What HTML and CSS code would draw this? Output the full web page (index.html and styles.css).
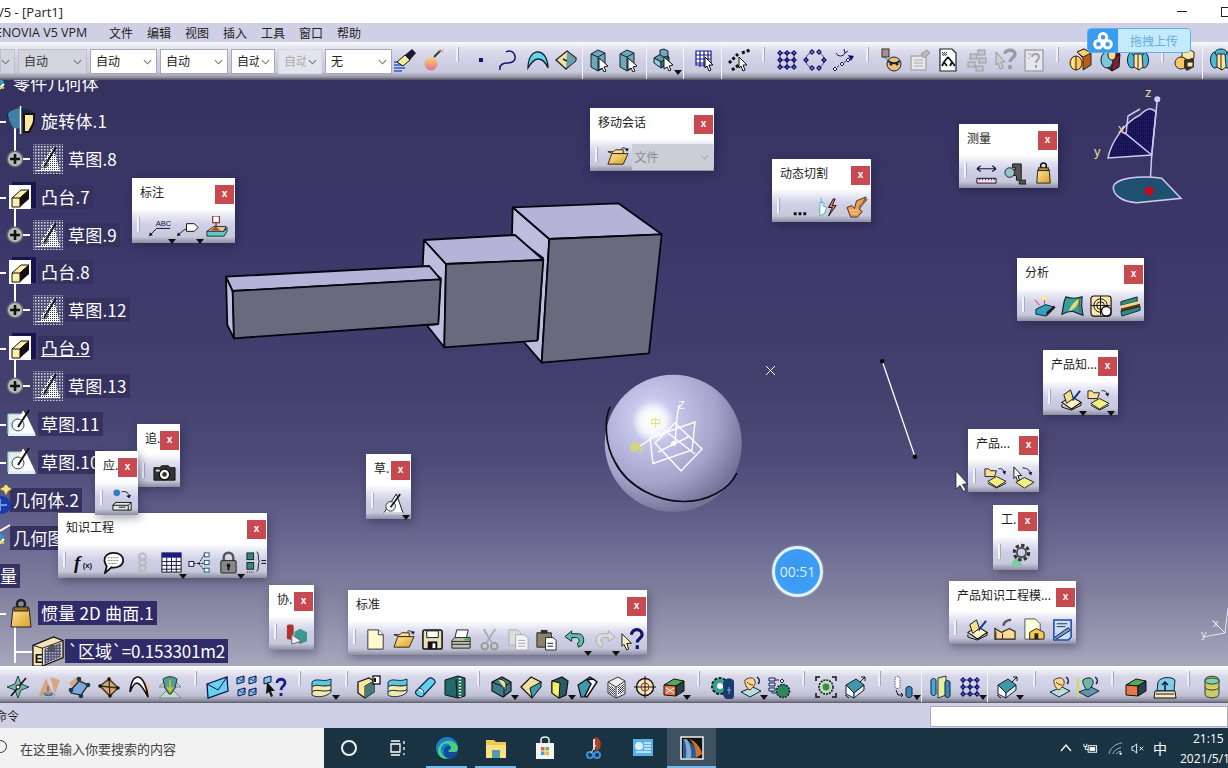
FILE: index.html
```html
<!DOCTYPE html>
<html lang="zh">
<head>
<meta charset="utf-8">
<title>CATIA V5 - [Part1]</title>
<link rel="stylesheet" href="styles.css">
</head>
<body>
<svg class="defs" aria-hidden="true">
<defs>
<pattern id="dith" width="2" height="2" patternUnits="userSpaceOnUse"><rect width="2" height="2" fill="#eef"/><rect width="1" height="1" fill="#334"/><rect x="1" y="1" width="1" height="1" fill="#556"/></pattern>
<pattern id="dotw" width="2" height="2" patternUnits="userSpaceOnUse"><rect width="2" height="2" fill="#fff"/><rect width="1" height="1" fill="#3a3a55"/></pattern>
<pattern id="dotd" width="3" height="3" patternUnits="userSpaceOnUse"><rect width="3" height="3" fill="#4a4a72"/><rect width="1.500" height="1.500" fill="#d8d8e8"/></pattern>
<pattern id="hatch" width="2" height="2" patternUnits="userSpaceOnUse"><rect width="2" height="2" fill="#15124f"/><rect width="1" height="1" fill="#25216c"/></pattern>
<linearGradient id="gold" x1="0" y1="0" x2="1" y2="1"><stop offset="0" stop-color="#ffe7a0"/><stop offset="1" stop-color="#d9a020"/></linearGradient>
<linearGradient id="bulbg" x1="0" y1="0" x2="0" y2="1"><stop offset="0" stop-color="#ffd060"/><stop offset="1" stop-color="#e070a0"/></linearGradient>
</defs>
<symbol id="brush" viewBox="0 0 24 24"><path d="M1 14h11M1 17h9M1 20h11M1 23h8" stroke="#2a5bd0" stroke-width="1.5"/><path d="M4 14l8-7 5 5-7 6z" fill="#f6e9a0" stroke="#111"/><path d="M12 7l7-6 4 4-6 7z" fill="#1c1c30"/></symbol>
<symbol id="bulb" viewBox="0 0 24 24"><circle cx="9" cy="16" r="6.5" fill="url(#bulbg)"/><path d="M12 9l7-7" stroke="#333" stroke-width="2"/><path d="M17 3l5-1M18 1l3 4" stroke="#e8a080"/></symbol>
<symbol id="pt" viewBox="0 0 24 24"><rect x="10" y="10" width="4" height="4" fill="#141470"/></symbol>
<symbol id="curve" viewBox="0 0 24 24"><path d="M3 22c-1-6 4-7 8-7s8-2 7-7-6-6-9-4" fill="none" stroke="#141470" stroke-width="1.5"/></symbol>
<symbol id="surf" viewBox="0 0 24 24"><path d="M2 20C2 8 8 3 13 4s9 7 9 16c-3-7-6-9-10-9s-7 4-10 9z" fill="#5fd8e8" stroke="#123" stroke-width="1.3"/></symbol>
<symbol id="block" viewBox="0 0 24 24"><path d="M2 12L13 3l9 7-10 11z" fill="#f3e2a2" stroke="#222" stroke-width="1.3"/><path d="M13 3l9 7v3L12 21" fill="#6ca0a8" stroke="#222"/><path d="M9 11l4 2" stroke="#222" stroke-width="1.4"/></symbol>
<symbol id="vcube" viewBox="0 0 24 24"><path d="M4 6l7-4 7 3v14l-7 4-7-4z" fill="#70a8b8" stroke="#123"/><path d="M4 6l7 3 7-4M11 9v14" stroke="#123" fill="none"/><path d="M12 10l9 8-4 1 2 4-2 1-2-4-3 2z" fill="#fff" stroke="#111"/></symbol>
<symbol id="cstack" viewBox="0 0 24 24"><path d="M1 10l8-5 7 4-8 5z" fill="#5f98a8" stroke="#123"/><path d="M1 10v5l7 5V14z" fill="#9cc8d2" stroke="#123"/><path d="M8 14v6l8-5V9z" fill="#3d7888" stroke="#123"/><path d="M7 2l4-1 4 2v5l-4 1-4-2z" fill="#70a8b8" stroke="#123"/><path d="M11 9l9 8-4 1 2 4-2 1-2-4-3 2z" fill="#fff" stroke="#111"/></symbol>
<symbol id="gridc" viewBox="0 0 24 24"><path d="M4 3h15v14H4zM4 7h15M4 11h15M4 15h15M8 3v16M12 3v16M16 3v14" fill="#fff" stroke="#1a1a90" stroke-width="1.2"/><path d="M13 9l8 8-4 0 2 5-2 1-2-5-2 2z" fill="#fff" stroke="#111"/></symbol>
<symbol id="dotc" viewBox="0 0 24 24"><path d="M1 15l9-9M14 5l8-3M4 22l8-6" stroke="#111" stroke-width="3" stroke-dasharray="3 2" fill="none"/><path d="M11 9l8 8-4 0 2 5-2 1-2-5-2 2z" fill="#fff" stroke="#111"/></symbol>
<symbol id="grid9" viewBox="0 0 24 24"><path d="M5 5h14v14H5zM5 12h14M12 5v14" fill="none" stroke="#111070" stroke-width=".8"/><g fill="none" stroke="#0c0c70" stroke-width="1.3"><path d="M3 5l2-2 2 2-2 2zM10 5l2-2 2 2-2 2zM17 5l2-2 2 2-2 2zM3 12l2-2 2 2-2 2zM10 12l2-2 2 2-2 2zM17 12l2-2 2 2-2 2zM3 19l2-2 2 2-2 2zM10 19l2-2 2 2-2 2zM17 19l2-2 2 2-2 2z"/></g></symbol>
<symbol id="circ8" viewBox="0 0 24 24"><g fill="none" stroke="#0c0c70" stroke-width="1.3"><path d="M7 4l2-2 2 2-2 2zM14 4l2-2 2 2-2 2zM1 12l2-2 2 2-2 2zM19 12l2-2 2 2-2 2zM7 20l2-2 2 2-2 2zM14 20l2-2 2 2-2 2z"/></g><path d="M7 5c-3 2-4 4-4 7s1 5 4 7M17 5c3 2 4 4 4 7s-1 5-4 7" fill="none" stroke="#0c0c70" stroke-width=".7"/></symbol>
<symbol id="arrdots" viewBox="0 0 24 24"><path d="M2 21L22 8" stroke="#111070" stroke-dasharray="2 2"/><path d="M16 7l6 1-3 5z" fill="#111070"/><g fill="#fff" stroke="#0c0c70"><path d="M1 21l2-2 2 2-2 2zM8 16l2-2 2 2-2 2zM14 12l2-2 2 2-2 2z"/></g><path d="M4 5c2 4 7 4 9 0M12 1l1 4 3-2" fill="none" stroke="#111070"/></symbol>
<symbol id="geoc" viewBox="0 0 24 24"><rect x="3" y="1" width="7" height="8" fill="#a89080" stroke="#333"/><path d="M5 9l7 6" stroke="#333" stroke-dasharray="2 1"/><circle cx="15" cy="16" r="7" fill="#f0c070" stroke="#124"/><path d="M9 13c4 3 8 3 12 0" fill="none" stroke="#124" stroke-width="2"/><circle cx="12" cy="16" r="1.5" fill="#124"/><circle cx="18" cy="16" r="1.5" fill="#124"/></symbol>
<symbol id="gdoc" viewBox="0 0 24 24"><path d="M3 8h15v14H3z" fill="#e8e8ee" stroke="#aaa" stroke-width="1.4"/><path d="M6 12h9M6 15h9M6 18h9" stroke="#aaa"/><path d="M13 6l6-4 3 3-6 5z" fill="#bbb" stroke="#999"/></symbol>
<symbol id="tdoc" viewBox="0 0 24 24"><path d="M4 1h12l4 4v18H4z" fill="#fff" stroke="#222" stroke-width="1.2"/><rect x="6" y="4" width="5" height="4" fill="url(#dith)"/><path d="M12 9l-4 5M12 9l4 5M8 14l-2 4M8 14l3 4M16 14l-2 4M16 14l3 4" stroke="#111" stroke-width="1.8"/></symbol>
<symbol id="gpat" viewBox="0 0 24 24"><g fill="#c4c4cc" stroke="#9a9aa4"><rect x="13" y="2" width="7" height="5"/><rect x="5" y="6" width="7" height="5"/><rect x="14" y="10" width="7" height="5"/><rect x="3" y="14" width="7" height="5"/><rect x="11" y="18" width="7" height="5"/></g></symbol>
<symbol id="gq" viewBox="0 0 24 24"><path d="M3 4l9 10-4 0 2 6-3 1-2-6-2 2z" fill="#ccc" stroke="#999"/><path d="M12 6c0-5 10-5 10 0 0 4-5 4-5 8M17 17v4" fill="none" stroke="#9a9aa6" stroke-width="3.4"/></symbol>
<symbol id="gqd" viewBox="0 0 24 24"><rect x="3" y="2" width="18" height="21" fill="#e6e6ec" stroke="#a0a0aa" stroke-width="1.4"/><path d="M10 9c0-4 7-4 7 0 0 3-3 3-3 6M14 17v3" fill="none" stroke="#a0a0aa" stroke-width="2"/><path d="M6 6h3M6 10h2" stroke="#aaa"/></symbol>
<symbol id="ocube" viewBox="0 0 24 24"><path d="M8 4l7-3 7 4v12l-8 5V10z" fill="#b85c18" stroke="#322"/><path d="M8 4l6 5 8-4-7-4z" fill="#fbd070" stroke="#322"/><ellipse cx="7" cy="15" rx="6" ry="7" fill="#ffc850" stroke="#322"/><path d="M7 8v14" stroke="#322"/><path d="M4 11v8" stroke="#fff2c0" stroke-width="1.500"/></symbol>
<symbol id="dcube" viewBox="0 0 24 24"><path d="M7 7l7-5 8 4-1 13-7 4-7-5z" fill="#7a2038" stroke="#111"/><path d="M7 7l7 4 8-5M14 11v12" stroke="#111" fill="none"/><ellipse cx="9" cy="12" rx="6" ry="8" fill="#7ec8d8" stroke="#123"/><ellipse cx="14" cy="7" rx="4" ry="5" fill="#ffe090" stroke="#311"/></symbol>
<symbol id="bcube" viewBox="0 0 24 24"><ellipse cx="6" cy="12" rx="4.5" ry="8" fill="#4db8d8" stroke="#123"/><ellipse cx="18" cy="12" rx="4.5" ry="8" fill="#4db8d8" stroke="#123"/><ellipse cx="12" cy="5" rx="6" ry="4" fill="#4db8d8" stroke="#123"/><path d="M8 6l8 0 1 13-4 3-5-3z" fill="#ffe7a0" stroke="#322"/><path d="M12 6v16" stroke="#322"/></symbol>
<symbol id="ycube" viewBox="0 0 24 24"><path d="M9 2l6-1 6 3v6l-6 2-6-3z" fill="#ffe7a0" stroke="#322"/><ellipse cx="8" cy="15" rx="6" ry="6" fill="#f7c860" stroke="#322"/><path d="M11 12l10-2v9l-7 4-3-3z" fill="#333"/><path d="M14 14h6v5h-6z" fill="#ffe7a0" stroke="#322"/></symbol>
<symbol id="bstar" viewBox="0 0 24 24"><path d="M12 1l3 8 8 3-8 3-3 8-3-8-8-3 8-3z" fill="#7cb8a8" stroke="#244"/><path d="M5 21L20 3" stroke="#111" stroke-width="1.6"/><circle cx="12" cy="12" r="2" fill="#fff" stroke="#111"/></symbol>
<symbol id="btan1" viewBox="0 0 24 24"><path d="M1 22L9 3l7 16zM13 2l10 3-5 14z" fill="#d9a684"/><path d="M11 11v6M7 19a5 3 0 0 0 9 0z" fill="#cfe8f0" stroke="#446"/><ellipse cx="11" cy="20" rx="7" ry="3" fill="none" stroke="#7ab" /></symbol>
<symbol id="btan2" viewBox="0 0 24 24"><path d="M2 8l8-6 13 8-10 12z" fill="#d9a684"/><path d="M4 15l8-9 9 4-7 10-10-2z" fill="#7ea8dc" stroke="#123" stroke-width="1.2"/><g fill="#1a3a4a"><circle cx="12" cy="4" r="2.3"/><circle cx="4" cy="15" r="2.3"/><circle cx="21" cy="10" r="2.3"/><circle cx="14" cy="21" r="2.3"/></g></symbol>
<symbol id="btan3" viewBox="0 0 24 24"><path d="M2 12L12 2l10 10-10 10z" fill="#d9a684"/><path d="M3 11l9-7 9 9-8 8zM12 4l1 17M3 11l18 2" fill="none" stroke="#331" stroke-width="1.3"/><g fill="#111"><circle cx="12" cy="4" r="1.7"/><circle cx="3" cy="11" r="1.7"/><circle cx="21" cy="13" r="1.7"/><circle cx="13" cy="21" r="1.7"/></g></symbol>
<symbol id="bshape" viewBox="0 0 24 24"><path d="M12 2l11 10-6 11z" fill="#e8c4a4"/><path d="M2 17C3 6 6 2 10 2c5 0 9 11 10 20-4-8-7-13-11-14-3 0-5 4-7 9z" fill="#fff" stroke="#111" stroke-width="1.7"/></symbol>
<symbol id="bgreen" viewBox="0 0 24 24"><path d="M1 12L12 1l11 11H1zM1 23l11-11 11 11z" fill="#c8d8c0" stroke="#789"/><path d="M5 4c4-3 10-3 14 0l-2 9-4 6-2 0-4-6z" fill="#4fa090" stroke="#234"/><path d="M12 5v10M9 12l3 4 3-4" stroke="#d8c030" stroke-width="1.6" fill="none"/></symbol>
<symbol id="env" viewBox="0 0 24 24"><path d="M1 9l20-7 1 14-20 7z" fill="#66d4f0" stroke="#115" stroke-width="1.3"/><path d="M1 9l11 6 9-13" fill="none" stroke="#115"/></symbol>
<symbol id="env4" viewBox="0 0 24 24"><g fill="#7ec8e8" stroke="#115"><path d="M2 3l7-2v6l-7 2zM14 3l7-2v6l-7 2zM3 15l7-2v6l-7 2zM14 15l7-2v6l-7 2z"/></g><path d="M2 3l5 3 2-5M14 3l5 3 2-5M3 15l5 3 2-5M14 15l5 3 2-5" fill="none" stroke="#115" stroke-width=".7"/></symbol>
<symbol id="envq" viewBox="0 0 24 24"><path d="M1 3l7-2v6l-7 2z" fill="#7ec8e8" stroke="#115"/><path d="M4 7l8 9-4 0 2 5-2 1-2-5-3 2z" fill="#111"/><path d="M14 8c0-5 8-5 8 0 0 3-4 3-4 7M18 18v3" fill="none" stroke="#1a1a90" stroke-width="2.8"/></symbol>
<symbol id="layer" viewBox="0 0 24 24"><path d="M2 7c5-5 10 1 19-3v6c-9 3-14-2-19 2z" fill="#5fc8d8" stroke="#135"/><path d="M2 12c5-4 10 1 19-2v5c-9 4-14-2-19 2z" fill="#f8e8a8" stroke="#135"/><path d="M2 17c5-4 10 1 19-2v2c-4 5-15 6-19 3z" fill="#f8e8a8" stroke="#135"/></symbol>
<symbol id="boxa" viewBox="0 0 24 24"><path d="M1 7l11-4 5 3v11l-9 6-7-5z" fill="#ffe7a0" stroke="#111" stroke-width="1.3"/><path d="M8 23V11l9-5" fill="#336" stroke="#111"/><path d="M8 11l9-5v11l-9 6z" fill="#4a7a78"/><rect x="16" y="1" width="7" height="8" fill="#fff" stroke="#111" stroke-width="1.3"/><path d="M18 3v4" stroke="#111" stroke-width="2"/></symbol>
<symbol id="capsule" viewBox="0 0 24 24"><path d="M2 16L14 4c3-3 8 1 7 4L9 21c-3 2-9-2-7-5z" fill="#5fd0f0" stroke="#124" stroke-width="1.2"/><path d="M4 14c2-2 6 1 6 5" fill="#fff" stroke="#124"/></symbol>
<symbol id="ribbed" viewBox="0 0 24 24"><path d="M2 5l13-4 7 2v18l-7 2-13-3z" fill="#1f6a6a" stroke="#111"/><path d="M13 4l1 18" stroke="#111"/><path d="M17 3v19" stroke="#ffe7a0" stroke-width="2.4" stroke-dasharray="1.5 1.5"/></symbol>
<symbol id="bt1" viewBox="0 0 24 24"><path d="M2 7l10-5 9 5v9l-8 6-11-6z" fill="#3f7a88" stroke="#111" stroke-width="1.2"/><path d="M2 7l12 5 7-5" fill="none" stroke="#111"/><path d="M8 4c4 0 8 2 8 6v6" fill="#f5d8a0" stroke="#111"/><path d="M14 12v10" stroke="#111"/></symbol>
<symbol id="bt2" viewBox="0 0 24 24"><path d="M2 12L12 2l10 5-9 16z" fill="#f2dfa0" stroke="#111" stroke-width="1.2"/><path d="M22 7v5L13 23 11 13z" fill="#3f98a8" stroke="#111"/></symbol>
<symbol id="bt3" viewBox="0 0 24 24"><path d="M5 6l10-4 6 4-2 14-7 3-7-5z" fill="#2a5a68" stroke="#111" stroke-width="1.2"/><path d="M5 6l8 2-1 15-7-5z" fill="#f4f060" stroke="#111"/></symbol>
<symbol id="bt4" viewBox="0 0 24 24"><path d="M2 10L14 2l4 3-9 17H5z" fill="#3f98a8" stroke="#111" stroke-width="1.2"/><path d="M11 5l6-1 4 3-10 15-2-1 6-12z" fill="#fff" stroke="#111" stroke-width="1.5"/></symbol>
<symbol id="bt5" viewBox="0 0 24 24"><path d="M4 7l10-5 7 4v13l-9 4-8-5z" fill="#eee" stroke="#333"/><path d="M4 7l8 5 9-6M12 12v11" fill="none" stroke="#333"/><path d="M5 10l6 3v8l-6-3zM14 12l6-3v8l-6 3z" fill="url(#dith)"/></symbol>
<symbol id="cross" viewBox="0 0 24 24"><circle cx="12" cy="12" r="8.5" fill="#f6e7ba" stroke="#111" stroke-width="1.4"/><path d="M12 1v22M1 12h22" stroke="#111"/><circle cx="12" cy="12" r="4" fill="none" stroke="#a22"/></symbol>
<symbol id="obox" viewBox="0 0 24 24"><path d="M2 10l10-6 10 2-8 5z" fill="#58a858" stroke="#111"/><path d="M2 10l12 1v10L2 20z" fill="#e87848" stroke="#111"/><path d="M14 11l8-5v10l-8 5z" fill="#284048" stroke="#111"/><path d="M4 13l8 5M12 13l-8 5" stroke="#fff"/></symbol>
<symbol id="gear" viewBox="0 0 24 24"><circle cx="10" cy="11" r="8" fill="#3aa08a" stroke="#123" stroke-width="2" stroke-dasharray="3 1.5"/><circle cx="10" cy="11" r="3" fill="#fff"/><path d="M14 14a6 7 0 1 0 10 0 6 7 0 1 0-10 0" fill="#1a3a70"/><path d="M17 15h4M19 12v7" stroke="#7ad"/></symbol>
<symbol id="hand" viewBox="0 0 24 24"><path d="M2 17l9 5 11-6-8-4z" fill="#b8e0d8" stroke="#124"/><path d="M6 5c4-3 9-3 10 1 1 3-2 7-5 9-3-1-6-7-5-10z" fill="#f8d890" stroke="#532"/><path d="M8 7c2 2 4 3 6 3" stroke="#532" fill="none"/><path d="M18 2c3 2 3 5 1 7" fill="none" stroke="#124" stroke-width="1.4"/></symbol>
<symbol id="handg" viewBox="0 0 24 24"><path d="M2 17l9 5 11-6-8-4z" fill="#5f98a8" stroke="#124"/><path d="M6 5c4-3 9-3 10 1 1 3-2 7-5 9-3-1-6-7-5-10z" fill="#70b8a0" stroke="#124"/><path d="M18 2c3 2 3 5 1 7" fill="none" stroke="#124" stroke-width="1.4"/><path d="M1 3v20" stroke="#c8e040" stroke-width="2"/></symbol>
<symbol id="tree" viewBox="0 0 24 24"><path d="M2 3h6v3H2zM2 8h6v3H2zM2 13h6v3H2z" fill="#dde" stroke="#125"/><path d="M5 16v2h6M8 5h4" stroke="#125" fill="none"/><circle cx="16" cy="16" r="6.5" fill="#2f8858" stroke="#123" stroke-width="1.6" stroke-dasharray="2 1"/><path d="M15 4l2 2-2 2-2-2z" fill="#fff" stroke="#125"/></symbol>
<symbol id="gcirc" viewBox="0 0 24 24"><path d="M2 6V2h4M22 6V2h-4M2 18v4h4M22 18v4h-4" stroke="#111" fill="none" stroke-width="1.5"/><circle cx="12" cy="12" r="7" fill="#bde0c0" stroke="#111" stroke-dasharray="2 1" stroke-width="1.5"/><circle cx="12" cy="12" r="3.4" fill="#3f8848"/></symbol>
<symbol id="tarr" viewBox="0 0 24 24"><path d="M3 10l10-6 8 6-10 8z" fill="#3f98a8" stroke="#123"/><path d="M3 10v9l8 4v-5z" fill="#fff" stroke="#123"/><path d="M11 18v5l10-8v-5z" fill="#dfe8f0" stroke="#123"/><path d="M17 7l5-5M18 2h4v4M2 20l4 3" stroke="#111" fill="none"/></symbol>
<symbol id="cyla" viewBox="0 0 24 24"><path d="M3 3c1-2 4-2 5 0v9c-1 2-4 2-5 0z" fill="#fff" stroke="#456" stroke-dasharray="1.5 1"/><path d="M14 13c1-2 5-2 6 0v8c-1 2-5 2-6 0z" fill="#3c88b8" stroke="#123"/><path d="M4 15l2 5h5M9 18l2 2-2 2" stroke="#111" fill="none"/></symbol>
<symbol id="cylp" viewBox="0 0 24 24"><path d="M9 3l8-2v19l-8 3z" fill="#e8f0a0" stroke="#234"/><path d="M2 5c1-2 4-2 5 0v14c-1 2-4 2-5 0z" fill="#4aa8d8" stroke="#123"/><path d="M16 7c1-2 4-2 5 0v14c-1 2-4 2-5 0z" fill="#3c88b8" stroke="#123"/></symbol>
<symbol id="oboxs" viewBox="0 0 24 24"><path d="M2 10l10-6 10 2-8 5z" fill="#58a858" stroke="#111"/><path d="M2 10l12 1v10L2 20z" fill="#e87848" stroke="#111"/><path d="M14 11l8-5v10l-8 5z" fill="#284048" stroke="#111"/></symbol>
<symbol id="sky" viewBox="0 0 24 24"><path d="M5 7C7 2 18 1 22 5l-1 11H4z" fill="#80cce8" stroke="#123"/><path d="M12 18V7M9 10l3-3 3 3" stroke="#114" fill="none" stroke-width="1.5"/><path d="M2 16h20l1 7H1z" fill="#f4e8c0" stroke="#111"/><path d="M3 19h18" stroke="#111"/></symbol>
<symbol id="ycyl" viewBox="0 0 24 24"><path d="M5 5c0-5 14-5 14 0v14c0 5-14 5-14 0z" fill="#d0c860" stroke="#244"/><path d="M5 6c0 4 14 4 14 0 0-4-14-4-14 0z" fill="#80d0a8" stroke="#244"/><path d="M5 12c0 4 14 4 14 0" fill="#e0d060" stroke="#244"/></symbol>
<symbol id="abc" viewBox="0 0 24 24"><text x="8" y="10" class="ic-abc">ABC</text><path d="M2 20l7-7h14" stroke="#114" fill="none"/><path d="M1 21l1-4 3 3z" fill="#114"/></symbol>
<symbol id="flag" viewBox="0 0 24 24"><path d="M2 20l7-6h2" stroke="#114" fill="none"/><path d="M1 21l1-4 3 3z" fill="#114"/><path d="M11 8h8l4 4-4 4h-8z" fill="#fff" stroke="#111"/></symbol>
<symbol id="stamp" viewBox="0 0 24 24"><rect x="8" y="0" width="7" height="7" fill="#fff" stroke="#732" stroke-width="1.2"/><path d="M11.500 7v5" stroke="#732" stroke-width="1.4"/><path d="M2 16l7-5h13l-3 6H5z" fill="#f4c090" stroke="#233"/><path d="M6 15l5-4 5 4z" fill="#b04818"/><path d="M2 16h18l3-4v4l-3 5H2z" fill="#5fc8c8" stroke="#233"/></symbol>
<symbol id="folder" viewBox="0 0 24 24"><path d="M2 7h6l2-2h8v4H8z" fill="#f8e090" stroke="#321"/><path d="M2 20L6 9h17l-5 11z" fill="url(#gold)" stroke="#321"/><path d="M16 4c2-2 5-1 5 2" fill="none" stroke="#123"/><path d="M20 3l2 4 2-3z" fill="#123"/></symbol>
<symbol id="dots3" viewBox="0 0 24 24"><path d="M6 17h3v3H6zM11 17h3v3h-3zM16 17h3v3h-3z" fill="#111"/></symbol>
<symbol id="bolts" viewBox="0 0 24 24"><path d="M5 2l1 3-2 2 3-1 2 2M4 9v12l5-3 2-6-4-2" stroke="#4ab" fill="#fff"/><path d="M18 3l-5 9h4l-4 9 8-11h-4l3-7z" fill="#e87878" stroke="#111"/></symbol>
<symbol id="hcut" viewBox="0 0 24 24"><path d="M2 12l5-2 3 3 2-8 10-4-7 13 3 2-5 6H6z" fill="#e8a050" stroke="#432"/><path d="M15 12l8-9" stroke="#864" stroke-width="2"/><path d="M5 15l9 0M6 18h8" stroke="#fff" stroke-dasharray="1 1"/></symbol>
<symbol id="ruler" viewBox="0 0 24 24"><path d="M2 17h20v5H2z" fill="#fde" stroke="#113"/><path d="M5 17v2M8 17v2M11 17v2M14 17v2M17 17v2M20 17v2" stroke="#113"/><path d="M2 7h20M2 7l4-3M2 7l4 3M22 7l-4-3M22 7l-4 3" stroke="#113" fill="none" stroke-width="1.2"/></symbol>
<symbol id="caliper" viewBox="0 0 24 24"><path d="M10 2h9v17h5v4h-7v-4h-3V14H8V8h5V6h-3z" fill="#555" stroke="#111"/><circle cx="7" cy="11" r="5" fill="#9cc0c8" stroke="#123"/></symbol>
<symbol id="weight" viewBox="0 0 24 24"><circle cx="12" cy="4" r="3" fill="none" stroke="#111" stroke-width="1.6"/><path d="M6 8h12l1 14H5z" fill="url(#gold)" stroke="#222"/><rect x="7" y="6" width="10" height="3" fill="#c09030" stroke="#222"/></symbol>
<symbol id="an1" viewBox="0 0 24 24"><path d="M3 15l10-5 10 3-9 9-11-2z" fill="#30a0c0" stroke="#123"/><path d="M23 13l-9 9v-4l8-7z" fill="#311"/><path d="M2 5l5 6M12 9V3" stroke="#d33"/><circle cx="12" cy="3" r="2.5" fill="#ffe880"/></symbol>
<symbol id="an2" viewBox="0 0 24 24"><path d="M1 20C3 11 2 8 5 2c6 2 11 2 17 0-1 7-1 11 1 19-5-2-7-2-11-4-4 0-7 1-11 3z" fill="#35a098" stroke="#123" stroke-width="1.2"/><path d="M8 17c3-7 6-10 11-13-1 6-4 10-8 12z" fill="#d8e070"/><path d="M19 4l1 14" stroke="#a33"/></symbol>
<symbol id="an3" viewBox="0 0 24 24"><rect x="1" y="1" width="21" height="21" rx="3" fill="#f8e8b0" stroke="#111" stroke-width="1.2"/><circle cx="11" cy="11" r="7" fill="none" stroke="#111"/><circle cx="11" cy="11" r="4" fill="none" stroke="#111"/><path d="M11 1v20M1 11h20" stroke="#111"/><circle cx="17" cy="17" r="5" fill="#fff" stroke="#111" stroke-width="1.5"/></symbol>
<symbol id="an4" viewBox="0 0 24 24"><path d="M2 7l17-5v5L2 11z" fill="#2f8f78" stroke="#124"/><path d="M2 11l20-5v3L2 15z" fill="#f0d890"/><path d="M2 14l20-5v5L2 18z" fill="#6a3010"/><path d="M2 17l20-5v4L3 22z" fill="#2f8f78" stroke="#124"/></symbol>
<symbol id="kbook" viewBox="0 0 24 24"><path d="M3 15l10-6 10 6-10 7z" fill="#fff6c0" stroke="#111" stroke-width="1.2"/><path d="M3 17v3l10 3 10-5v-3" fill="none" stroke="#111"/><path d="M5 7l7-5 3 9-7 5z" fill="#f0e090" stroke="#111"/><path d="M14 13l8-10" stroke="#1a3a90" stroke-width="2.2"/></symbol>
<symbol id="kfold" viewBox="0 0 24 24"><path d="M1 3h4l2 2h6l-2 6H1z" fill="#f8e090" stroke="#222"/><path d="M15 3c3-1 6 1 6 4" fill="none" stroke="#114"/><path d="M19 6l3 3 1-4z" fill="#114"/><path d="M4 16l9-5 10 5-10 6z" fill="#f4f080" stroke="#222"/><path d="M4 18l9 5 10-5" fill="none" stroke="#222"/></symbol>
<symbol id="kcur" viewBox="0 0 24 24"><path d="M2 1l8 9-4 0 2 5-2 1-2-5-2 2z" fill="#fff" stroke="#111"/><path d="M11 2c4 0 8 2 8 6" fill="none" stroke="#114"/><path d="M17 7l3 3 1-4z" fill="#114"/><path d="M4 17l9-5 10 5-10 6z" fill="#f4f080" stroke="#222"/></symbol>
<symbol id="cog" viewBox="0 0 24 24"><path d="M1 24l8-12 5 12z" fill="#80c8a8"/><circle cx="13" cy="10" r="7.500" fill="none" stroke="#333" stroke-width="3.200" stroke-dasharray="3.500 2.300"/><circle cx="13" cy="10" r="4.800" fill="none" stroke="#444" stroke-width="1.800"/></symbol>
<symbol id="kfac" viewBox="0 0 24 24"><path d="M2 11l7 4 8-4 6 3v8H2z" fill="#fdd890" stroke="#222" stroke-width="1.2"/><path d="M3 22v-8M10 22v-6" stroke="#222"/><path d="M11 8c0-5 6-6 8-6" stroke="#555" stroke-width="2.500" fill="none"/></symbol>
<symbol id="kdoc" viewBox="0 0 24 24"><path d="M3 1h11l5 5v16H3z" fill="#fffde0" stroke="#555"/><path d="M8 15l7-4 8 4v7H8z" fill="#fdc850" stroke="#222"/><rect x="13" y="16" width="4" height="6" fill="#222"/></symbol>
<symbol id="kblue" viewBox="0 0 24 24"><path d="M3 2h18v18L18 23H3z" fill="#cce0f4" stroke="#1a48b8" stroke-width="1.6"/><path d="M6 6h11M6 9h9" stroke="#234"/><path d="M4 20l14-10 2 3-14 9z" fill="#7a94c8" stroke="#124"/></symbol>
<symbol id="sketch" viewBox="0 0 24 24"><path d="M2 22L15 2l7 20z" fill="#fff" stroke="#111"/><path d="M2 22h20" stroke="#eef" stroke-width="1.500"/><circle cx="9" cy="15" r="5" fill="#e8f4f0" stroke="#333" stroke-width="1"/><path d="M9 16L19 2" stroke="#111" stroke-width="1.700"/></symbol>
<symbol id="apply" viewBox="0 0 24 24"><circle cx="6" cy="4" r="3.500" fill="#3a7ac0"/><path d="M11 3c3-1 7 0 8 4" fill="none" stroke="#114"/><path d="M16 7l3 3 2-4z" fill="#114"/><path d="M5 14h16v8H2v-5z" fill="#e8e8e8" stroke="#111"/><path d="M5 14L2 17h16l3-3M18 17v5M8 19h7" stroke="#111" fill="none"/></symbol>
<symbol id="camera" viewBox="0 0 24 24"><path d="M1 7h6l2-2h7l2 2h5v13H1z" fill="#333" stroke="#111"/><circle cx="12" cy="14" r="5.500" fill="#fff" stroke="#111" stroke-width="1.500"/><circle cx="12" cy="14" r="2.500" fill="#333"/><rect x="3" y="9" width="4" height="2" fill="#ddd"/></symbol>
<symbol id="collab" viewBox="0 0 24 24"><path d="M2 3c0-2 7-2 7 0v13c0 2-7 2-7 0z" fill="#b03030"/><path d="M10 9l6-3 7 4v9l-7 3-6-3z" fill="#3a9890"/><path d="M7 12l10 7-10 3z" fill="#eee" stroke="#666"/></symbol>
<symbol id="fx" viewBox="0 0 24 24"><text x="0" y="19" class="ic-f">f</text><text x="9" y="18" class="ic-x">(x)</text></symbol>
<symbol id="bubble" viewBox="0 0 24 24"><path d="M3 12C1 5 7 2 12 2c6 0 11 3 10 9-1 5-7 7-12 6l-7 6 2-7c-1-1-1-2-2-4z" fill="#fff" stroke="#111" stroke-width="1.800"/><path d="M6 7h12M6 10h12M7 13h9" stroke="#777" stroke-dasharray="2 1"/></symbol>
<symbol id="chain" viewBox="0 0 24 24"><g fill="none" stroke="#b8b8c0" stroke-width="2"><circle cx="12" cy="6" r="3.500"/><circle cx="12" cy="12" r="3.500"/><circle cx="12" cy="18" r="3.500"/></g></symbol>
<symbol id="table" viewBox="0 0 24 24"><rect x="2" y="2" width="20" height="20" fill="#fff" stroke="#112"/><rect x="2" y="2" width="20" height="5" fill="#1a1a8a"/><path d="M2 11h20M2 15h20M2 19h20M7 7v15M12 7v15M17 7v15" stroke="#114"/></symbol>
<symbol id="flow" viewBox="0 0 24 24"><rect x="1" y="11" width="5" height="5" fill="#fff" stroke="#114"/><g fill="#fff" stroke="#1a5a78"><rect x="17" y="2" width="5" height="4"/><rect x="17" y="10" width="5" height="4"/><rect x="17" y="18" width="5" height="4"/></g><path d="M6 13h5M11 13l6-9M11 13h6M11 13l6 7" stroke="#112" stroke-dasharray="2 1" fill="none"/></symbol>
<symbol id="lock" viewBox="0 0 24 24"><path d="M7 10V7c0-7 10-7 10 0v3" fill="none" stroke="#555" stroke-width="2.500"/><rect x="4" y="10" width="16" height="13" rx="1" fill="#888" stroke="#222"/><circle cx="12" cy="15" r="2" fill="#111"/><path d="M12 16v4" stroke="#111" stroke-width="2"/></symbol>
<symbol id="brace" viewBox="0 0 24 24"><g fill="#3a8a68" stroke="#123"><rect x="2" y="2" width="7" height="7"/><rect x="2" y="12" width="7" height="7"/></g><path d="M12 1c3 0 1 9 3 10-2 1 0 10-3 10" fill="none" stroke="#111"/><path d="M17 10h5M17 13h5" stroke="#111"/><path d="M2 22h8" stroke="#111" stroke-dasharray="1 1"/></symbol>
<symbol id="newdoc" viewBox="0 0 24 24"><path d="M4 2h11l5 5v15H4z" fill="#fff8d0" stroke="#333"/><path d="M15 2v5h5" fill="#fff" stroke="#333"/></symbol>
<symbol id="save" viewBox="0 0 24 24"><rect x="2" y="2" width="20" height="20" rx="2" fill="#e8e0b8" stroke="#111" stroke-width="1.600"/><path d="M6 3h12v7H6z" fill="#fff" stroke="#111"/><path d="M7 14h10v8H7z" fill="#111"/><rect x="12" y="16" width="3" height="5" fill="#fff"/></symbol>
<symbol id="print" viewBox="0 0 24 24"><path d="M7 2h12l-2 9H5z" fill="#fff" stroke="#222"/><path d="M2 13l3-3h16v11H2z" fill="#c0c0b0" stroke="#222"/><path d="M2 14h19M2 17h19" stroke="#222"/><rect x="15" y="11" width="5" height="2" fill="#4a4"/></symbol>
<symbol id="cut" viewBox="0 0 24 24"><path d="M6 1l8 14M18 1L9 15" stroke="#aaa" stroke-width="1.800" fill="none"/><circle cx="7" cy="19" r="3.500" fill="none" stroke="#999" stroke-width="2"/><circle cx="17" cy="19" r="3.500" fill="none" stroke="#999" stroke-width="2"/></symbol>
<symbol id="copy" viewBox="0 0 24 24"><path d="M2 2h9l3 3v13H2z" fill="#ddd" stroke="#aaa"/><path d="M9 7h9l4 4v12H9z" fill="#f2f2f2" stroke="#aaa"/><path d="M12 13h7M12 16h7M12 19h7" stroke="#aaa"/></symbol>
<symbol id="paste" viewBox="0 0 24 24"><path d="M2 5h15v15H2z" fill="#8a8468" stroke="#222"/><rect x="6" y="2" width="7" height="4" fill="#333"/><path d="M11 10h8l3 3v10H11z" fill="#fff" stroke="#222"/><path d="M13 16h6M13 19h6" stroke="#114"/></symbol>
<symbol id="undo" viewBox="0 0 24 24"><path d="M8 6h7c7 0 8 12 0 14l-1-4c3-1 2-6-1-6H8v4L1 9l7-6z" fill="#5fc0a0" stroke="#124"/></symbol>
<symbol id="redo" viewBox="0 0 24 24"><path d="M16 6H9C2 6 1 18 9 20l1-4c-3-1-2-6 1-6h5v4l7-5-7-6z" fill="#ddd" stroke="#aaa"/></symbol>
<symbol id="whats" viewBox="0 0 24 24"><path d="M1 6l10 10-5 0 2 6-2 1-3-6-2 2z" fill="#fff8c0" stroke="#111"/><path d="M11 7c0-7 11-7 11 0 0 4-5 4-5 8M17 18v4" fill="none" stroke="#14146a" stroke-width="3.400"/></symbol>
<symbol id="revolve" viewBox="0 0 30 30"><path d="M1 10C1 0 29 0 29 10v3H1z" fill="#12294a"/><path d="M2 8c0-3 10-6 12-6v19c-1 2-6 2-7 0-2-3-5-9-5-13z" fill="#3f80a8"/><path d="M18 8h10v6c0 5-3 7-5 12h-5z" fill="#ffe9a0" stroke="#111" stroke-width="2"/><path d="M14.500 -2v30" stroke="#fff" stroke-width="1.500"/></symbol>
<symbol id="pad" viewBox="0 0 30 30"><rect x="6" y="0" width="24" height="26" rx="1" fill="#17154e"/><rect x="3" y="3" width="22" height="24" fill="#fff"/><path d="M6 16l9-8h8l-9 8v9H6z" fill="#ffeeaa" stroke="#111"/><path d="M6 16h8l9-8" fill="none" stroke="#111"/><path d="M14 16v9l9-8V8z" fill="#111"/></symbol>
<symbol id="node" viewBox="0 0 30 30"><circle cx="15" cy="15" r="8.500" fill="#666"/><circle cx="15" cy="15" r="7" fill="#bbb"/><path d="M15 10v10M10 15h10" stroke="#111" stroke-width="2.600"/><path d="M23 15h7" stroke="#fff" stroke-width="2"/></symbol>
<symbol id="sketchd" viewBox="0 0 32 32"><rect x="1" y="1" width="30" height="30" fill="url(#dotd)"/><path d="M4 28L21 4l7 24z" fill="url(#dotw)"/><path d="M10 8h8l-9 14v5H5V14z" fill="url(#dotd)"/><path d="M12 24L24 4" stroke="#14142c" stroke-width="2"/><circle cx="12" cy="21" r="4" fill="none" stroke="#556"/></symbol>
<symbol id="sketchp" viewBox="0 0 30 30"><path d="M2 5h18l9 19H2z" fill="#dff0ea"/><path d="M17 2L29 26H2" fill="#fff" stroke="#fff" stroke-width="1.200"/><rect x="2" y="24" width="27" height="3" fill="#dfeef0"/><path d="M2 5h13M2 5v20" stroke="#9cc" stroke-width="1.200"/><circle cx="12" cy="16" r="6" fill="#f4faf8" stroke="#446"/><path d="M12 18L23 1" stroke="#111" stroke-width="2"/></symbol>
<symbol id="geob" viewBox="0 0 30 30"><circle cx="10" cy="20" r="9" fill="#1a3ab0"/><path d="M8 14v12M4 20h11" stroke="#79c" stroke-width="2"/><path d="M14 -2l2 4 4 2-4 2-2 4-2-4-4-2 4-2z" fill="#ffe060"/></symbol>
<symbol id="geos" viewBox="0 0 30 30"><circle cx="6" cy="16" r="6" fill="#39b"/><path d="M8 8l10-6M0 28l12-12" stroke="#fff" stroke-width="2"/><path d="M2 18l10 2" stroke="#ec4" stroke-width="2"/></symbol>
<symbol id="weight2" viewBox="0 0 30 30"><circle cx="15" cy="6" r="4" fill="none" stroke="#222" stroke-width="2.500"/><path d="M7 10h16l2 19H5z" fill="url(#gold)" stroke="#222"/><rect x="8" y="9" width="14" height="4" fill="#9a7020" stroke="#222"/></symbol>
<symbol id="formula" viewBox="0 0 34 34"><path d="M1 11l22-9 10 4v18L11 33H1z" fill="#f4e4b8" stroke="#111" stroke-width="1.400"/><path d="M11 14l22-8M11 14v19M1 11l10 3" stroke="#111" fill="none"/><path d="M13 15l18-7v15l-18 8z" fill="url(#dotd)"/><circle cx="21" cy="14" r="4" fill="#555"/><text x="3" y="30" class="ic-e">E</text></symbol>
</svg>

<header class="titlebar">
  <span class="title-text">V5 - [Part1]</span>
  <span class="win-ctrls"><i class="win-min"></i><i class="win-max"></i></span>
</header>

<nav class="menubar">
  <span class="menu-app">ENOVIA V5 VPM</span>
  <span class="menu-item">文件</span><span class="menu-item">编辑</span><span class="menu-item">视图</span><span class="menu-item">插入</span><span class="menu-item">工具</span><span class="menu-item">窗口</span><span class="menu-item">帮助</span>
</nav>

<div class="upload"><span class="upload-ic"><svg viewBox="0 0 24 24" class="upload-svg"><g fill="none" stroke="#fff" stroke-width="3.600"><circle cx="12" cy="7.500" r="4.500"/><circle cx="6.500" cy="16" r="4.500"/><circle cx="17.500" cy="16" r="4.500"/></g></svg></span><span class="upload-txt">拖拽上传</span></div>

<div class="toolbar top">
  <div class="selects">
    <span class="sel w15 off"><svg class="chev" viewBox="0 0 10 6"><path d="M1 1l4 4 4-4"/></svg></span>
    <span class="sel w69 off"><b>自动</b><svg class="chev" viewBox="0 0 10 6"><path d="M1 1l4 4 4-4"/></svg></span>
    <span class="sel w67"><b>自动</b><svg class="chev" viewBox="0 0 10 6"><path d="M1 1l4 4 4-4"/></svg></span>
    <span class="sel w68"><b>自动</b><svg class="chev" viewBox="0 0 10 6"><path d="M1 1l4 4 4-4"/></svg></span>
    <span class="sel w44"><b>自动</b><svg class="chev" viewBox="0 0 10 6"><path d="M1 1l4 4 4-4"/></svg></span>
    <span class="sel w44 dim"><b>自动</b><svg class="chev" viewBox="0 0 10 6"><path d="M1 1l4 4 4-4"/></svg></span>
    <span class="sel w67"><b>无</b><svg class="chev" viewBox="0 0 10 6"><path d="M1 1l4 4 4-4"/></svg></span>
  </div>
  <span class="b"><svg class="ic"><use href="#brush"/></svg></span>
  <span class="b"><svg class="ic"><use href="#bulb"/></svg></span>
  <i class="sep wide"></i>
  <span class="b"><svg class="ic"><use href="#pt"/></svg></span>
  <span class="b"><svg class="ic"><use href="#curve"/></svg></span>
  <span class="b"><svg class="ic"><use href="#surf"/></svg></span>
  <span class="b"><svg class="ic"><use href="#block"/></svg></span>
  <i class="sep full n4"></i>
  <span class="b"><svg class="ic"><use href="#vcube"/></svg></span>
  <span class="b"><svg class="ic"><use href="#vcube"/></svg></span>
  <i class="sep full n8"></i>
  <span class="b drop"><svg class="ic"><use href="#cstack"/></svg></span>
  <i class="sep full n10"></i>
  <span class="b"><svg class="ic"><use href="#gridc"/></svg></span>
  <i class="sep full n7"></i>
  <span class="b"><svg class="ic"><use href="#dotc"/></svg></span>
  <i class="sep wide"></i>
  <span class="b"><svg class="ic"><use href="#grid9"/></svg></span>
  <span class="b"><svg class="ic"><use href="#circ8"/></svg></span>
  <span class="b"><svg class="ic"><use href="#arrdots"/></svg></span>
  <i class="sep wide"></i>
  <span class="b"><svg class="ic"><use href="#geoc"/></svg></span>
  <span class="b"><svg class="ic"><use href="#gdoc"/></svg></span>
  <span class="b"><svg class="ic"><use href="#tdoc"/></svg></span>
  <span class="b"><svg class="ic"><use href="#gpat"/></svg></span>
  <span class="b"><svg class="ic"><use href="#gq"/></svg></span>
  <span class="b"><svg class="ic"><use href="#gqd"/></svg></span>
  <i class="sep wide"></i>
  <span class="b"><svg class="ic"><use href="#ocube"/></svg></span>
  <span class="b"><svg class="ic"><use href="#dcube"/></svg></span>
  <span class="b"><svg class="ic"><use href="#bcube"/></svg></span>
  <i class="sep wide"></i>
  <span class="b"><svg class="ic"><use href="#ycube"/></svg></span>
  <i class="sep full n7"></i>
  <span class="b drop"><svg class="ic"><use href="#bcube"/></svg></span>
</div>

<main class="viewport">
  <svg class="scene" viewBox="0 80 1228 586" aria-hidden="true">
    <defs>
      <radialGradient id="sph" cx="0.35" cy="0.32" r="0.78"><stop offset="0" stop-color="#f4f4ff"/><stop offset=".2" stop-color="#c8c8ec"/><stop offset=".6" stop-color="#a4a4cc"/><stop offset=".9" stop-color="#73739a"/><stop offset="1" stop-color="#7c7ca0"/></radialGradient>
      <radialGradient id="glow"><stop offset="0" stop-color="#fff"/><stop offset=".6" stop-color="#fff" stop-opacity=".75"/><stop offset="1" stop-color="#fff" stop-opacity="0"/></radialGradient>
    </defs>
    <g class="solid">
      <path class="lt" d="M512.700 207.300L549.300 239 541.700 362.700 523 341 538 339 543 258 512 235z"/>
      <path class="tp" d="M512.700 207.300L618.300 203.300 661.700 234.300 549.300 239z"/>
      <path class="fr" d="M549.300 239L661.700 234.300 649 353.300 541.700 362.700z"/>
      <path class="lt" d="M424 240L446 264 444.300 347.300 426.700 325 438 324 440.700 278.300 422.700 266z"/>
      <path class="tp" d="M424 240L515 235 543.300 260 446 264z"/>
      <path class="fr" d="M446 264L543.300 260 537.300 340.700 444.300 347.300z"/>
      <path class="lt" d="M226 276.700L232.700 291 234 338.300 227.300 325z"/>
      <path class="tp" d="M226 276.700L429.300 266 440.700 279.300 232.700 291z"/>
      <path class="fr" d="M232.700 291L440.700 279.300 438.300 324 234 338.300z"/>
    </g>
    <circle cx="673.300" cy="443.300" r="68.500" fill="url(#sph)"/>
    <circle cx="653" cy="422" r="21" fill="url(#glow)"/>
    <path class="arc" d="M610 407C604 420 605 445 615 462 628 488 660 502 685 501.500 707 501 729 490 737 473"/>
    <g class="axis">
      <path d="M650 438L695 422 692 450 653 463.500z"/>
      <path d="M702 449L675 423 655 443 681 471z"/>
      <path d="M679 405L677 417 675 443M640 446L652 438M664 430L695 454M658 452L690 436"/>
      <text x="678" y="409" class="ax-z">Z</text>
      <circle cx="673.500" cy="443.500" r="2.500" class="ax-dot"/>
    </g>
    <circle cx="635" cy="447" r="5" class="ys"/>
    <text x="638" y="451" class="ax-y">y</text>
    <text x="650" y="427" class="ax-y">中</text>
    <path class="mark" d="M766 366l9 9M775 366l-9 9"/>
    <path class="wline" d="M882.300 361.300L915 456.700"/>
    <circle cx="882.300" cy="361.300" r="2.200"/>
    <circle cx="915" cy="456.700" r="2.200"/>
    <path class="cursor" d="M956 471v18l4-3.500 3.500 6 2.500-1.500-3.500-5.500 5-1z"/>
    <g class="compass">
      <path class="hatch" d="M1108 158C1111 142 1125 122 1140 115 1147 108 1152 107 1156 112L1151.700 155z"/>
      <path d="M1157.300 99.300L1151.700 155 1150 186.700"/>
      <path d="M1122 132L1126 134 1151.700 155M1126 134L1128 116 1140 109"/>
      <path class="plane" d="M1113.300 187.300C1115 178 1140 175 1161.700 178.300L1181 198.300 1136.700 202.700C1124 202 1113 196 1113.300 187.300z"/>
      <circle cx="1157.300" cy="99.300" r="3" class="c-dot"/>
      <circle cx="1149.300" cy="191" r="4.500" class="c-red"/>
      <text x="1145" y="97" class="c-t">z</text>
      <text x="1118" y="133" class="c-t">x</text>
      <text x="1094" y="156" class="c-t">y</text>
    </g>
    <g class="mini">
      <path d="M1203 637L1225 633 1212 620M1225 633L1228 608"/>
      <text x="1201" y="638">y</text>
      <text x="1213" y="627">x</text>
    </g>
  </svg>

  <div class="tree">
    <div class="row lv0"><svg class="ti"><use href="#geos"/></svg><span class="lab">零件几何体</span></div>
    <div class="row lv1 stem"><svg class="ti"><use href="#revolve"/></svg><span class="lab clear">旋转体.1</span></div>
    <div class="row lv2"><svg class="tn"><use href="#node"/></svg><svg class="ts"><use href="#sketchd"/></svg><span class="lab clear">草图.8</span></div>
    <div class="row lv1 stem"><svg class="ti"><use href="#pad"/></svg><span class="lab">凸台.7</span></div>
    <div class="row lv2"><svg class="tn"><use href="#node"/></svg><svg class="ts"><use href="#sketchd"/></svg><span class="lab">草图.9</span></div>
    <div class="row lv1 stem"><svg class="ti"><use href="#pad"/></svg><span class="lab">凸台.8</span></div>
    <div class="row lv2"><svg class="tn"><use href="#node"/></svg><svg class="ts"><use href="#sketchd"/></svg><span class="lab">草图.12</span></div>
    <div class="row lv1 stem"><svg class="ti"><use href="#pad"/></svg><span class="lab under">凸台.9</span></div>
    <div class="row lv2"><svg class="tn"><use href="#node"/></svg><svg class="ts"><use href="#sketchd"/></svg><span class="lab">草图.13</span></div>
    <div class="row lv1"><svg class="ti"><use href="#sketchp"/></svg><span class="lab">草图.11</span></div>
    <div class="row lv1"><svg class="ti"><use href="#sketchp"/></svg><span class="lab">草图.10</span></div>
    <div class="row lv0"><svg class="ti"><use href="#geob"/></svg><span class="lab">几何体.2</span></div>
    <div class="row lv0"><svg class="ti"><use href="#geos"/></svg><span class="lab">几何图形集.1</span></div>
    <div class="row lvm"><span class="lab">量</span></div>
    <div class="row lv1 stem long"><svg class="ti"><use href="#weight2"/></svg><span class="lab pick">惯量 2D 曲面.1</span></div>
    <div class="row lv2 leaf"><svg class="ts big"><use href="#formula"/></svg><span class="lab pick tight">`区域`=0.153301m2</span></div>
  </div>

  <section class="pal p1"><header class="pal-h"><span class="pal-t">标注</span><span class="pal-x">x</span></header><div class="pal-b tall"><i class="grip"></i>
    <span class="c drop"><svg class="ic"><use href="#abc"/></svg></span><span class="c drop"><svg class="ic"><use href="#flag"/></svg></span><span class="c"><svg class="ic"><use href="#stamp"/></svg></span></div></section>

  <section class="pal p2"><header class="pal-h"><span class="pal-t">移动会话</span><span class="pal-x">x</span></header><div class="pal-b low"><i class="grip"></i>
    <span class="c"><svg class="ic"><use href="#folder"/></svg></span><span class="pal-sel">文件<svg class="chev" viewBox="0 0 10 6"><path d="M1 1l4 4 4-4"/></svg></span></div></section>

  <section class="pal p3"><header class="pal-h"><span class="pal-t">动态切割</span><span class="pal-x">x</span></header><div class="pal-b low"><i class="grip"></i>
    <span class="c"><svg class="ic"><use href="#dots3"/></svg></span><span class="c"><svg class="ic"><use href="#bolts"/></svg></span><span class="c"><svg class="ic"><use href="#hcut"/></svg></span></div></section>

  <section class="pal p4"><header class="pal-h"><span class="pal-t">测量</span><span class="pal-x">x</span></header><div class="pal-b"><i class="grip"></i>
    <span class="c"><svg class="ic"><use href="#ruler"/></svg></span><span class="c"><svg class="ic"><use href="#caliper"/></svg></span><span class="c"><svg class="ic"><use href="#weight"/></svg></span></div></section>

  <section class="pal p5"><header class="pal-h"><span class="pal-t">分析</span><span class="pal-x">x</span></header><div class="pal-b low"><i class="grip"></i>
    <span class="c"><svg class="ic"><use href="#an1"/></svg></span><span class="c"><svg class="ic"><use href="#an2"/></svg></span><span class="c"><svg class="ic"><use href="#an3"/></svg></span><span class="c"><svg class="ic"><use href="#an4"/></svg></span></div></section>

  <section class="pal p6"><header class="pal-h"><span class="pal-t">产品知...</span><span class="pal-x">x</span></header><div class="pal-b tall"><i class="grip"></i>
    <span class="c drop"><svg class="ic"><use href="#kbook"/></svg></span><span class="c drop"><svg class="ic"><use href="#kfold"/></svg></span></div></section>

  <section class="pal p7"><header class="pal-h"><span class="pal-t">产品...</span><span class="pal-x">x</span></header><div class="pal-b low"><i class="grip"></i>
    <span class="c"><svg class="ic"><use href="#kfold"/></svg></span><span class="c"><svg class="ic"><use href="#kcur"/></svg></span></div></section>

  <section class="pal p8"><header class="pal-h"><span class="pal-t">工.</span><span class="pal-x">x</span></header><div class="pal-b tall"><i class="grip"></i>
    <span class="c"><svg class="ic"><use href="#cog"/></svg></span></div></section>

  <section class="pal p9"><header class="pal-h"><span class="pal-t">产品知识工程模...</span><span class="pal-x">x</span></header><div class="pal-b low"><i class="grip"></i>
    <span class="c"><svg class="ic"><use href="#kbook"/></svg></span><span class="c"><svg class="ic"><use href="#kfac"/></svg></span><span class="c"><svg class="ic"><use href="#kdoc"/></svg></span><span class="c"><svg class="ic"><use href="#kblue"/></svg></span></div></section>

  <section class="pal p10"><header class="pal-h"><span class="pal-t">草.</span><span class="pal-x">x</span></header><div class="pal-b tall"><i class="grip"></i>
    <span class="c drop"><svg class="ic"><use href="#sketch"/></svg></span></div></section>

  <section class="pal p11"><header class="pal-h"><span class="pal-t">标准</span><span class="pal-x">x</span></header><div class="pal-b tall"><i class="grip"></i>
    <span class="c"><svg class="ic"><use href="#newdoc"/></svg></span><span class="c"><svg class="ic"><use href="#folder"/></svg></span><span class="c"><svg class="ic"><use href="#save"/></svg></span><span class="c"><svg class="ic"><use href="#print"/></svg></span><span class="c"><svg class="ic"><use href="#cut"/></svg></span><span class="c"><svg class="ic"><use href="#copy"/></svg></span><span class="c"><svg class="ic"><use href="#paste"/></svg></span><span class="c drop"><svg class="ic"><use href="#undo"/></svg></span><span class="c drop"><svg class="ic"><use href="#redo"/></svg></span><span class="c"><svg class="ic"><use href="#whats"/></svg></span></div></section>

  <section class="pal p12"><header class="pal-h"><span class="pal-t">协.</span><span class="pal-x">x</span></header><div class="pal-b tall"><i class="grip"></i>
    <span class="c"><svg class="ic"><use href="#collab"/></svg></span></div></section>

  <section class="pal p13"><header class="pal-h"><span class="pal-t">知识工程</span><span class="pal-x">x</span></header><div class="pal-b tall"><i class="grip"></i>
    <span class="c"><svg class="ic"><use href="#fx"/></svg></span><span class="c"><svg class="ic"><use href="#bubble"/></svg></span><span class="c"><svg class="ic"><use href="#chain"/></svg></span><span class="c drop"><svg class="ic"><use href="#table"/></svg></span><span class="c"><svg class="ic"><use href="#flow"/></svg></span><span class="c drop"><svg class="ic"><use href="#lock"/></svg></span><span class="c"><svg class="ic"><use href="#brace"/></svg></span></div></section>

  <section class="pal p14"><header class="pal-h"><span class="pal-t">追.</span><span class="pal-x">x</span></header><div class="pal-b low"><i class="grip"></i>
    <span class="c"><svg class="ic"><use href="#camera"/></svg></span></div></section>

  <section class="pal p15"><header class="pal-h"><span class="pal-t">应.</span><span class="pal-x">x</span></header><div class="pal-b"><i class="grip"></i>
    <span class="c"><svg class="ic"><use href="#apply"/></svg></span></div></section>

  <div class="timer">00:51</div>
</main>

<div class="toolbar bottom">
  <span class="b b30"><svg class="ic"><use href="#bstar"/></svg></span>
  <span class="b b30"><svg class="ic"><use href="#btan1"/></svg></span>
  <span class="b b30"><svg class="ic"><use href="#btan2"/></svg></span>
  <span class="b b30"><svg class="ic"><use href="#btan3"/></svg></span>
  <span class="b b30"><svg class="ic"><use href="#bshape"/></svg></span>
  <span class="b b30"><svg class="ic"><use href="#bgreen"/></svg></span>
  <i class="sep wide"></i>
  <span class="b"><svg class="ic"><use href="#env"/></svg></span>
  <span class="b"><svg class="ic"><use href="#env4"/></svg></span>
  <span class="b"><svg class="ic"><use href="#envq"/></svg></span>
  <i class="sep wide"></i>
  <span class="b drop"><svg class="ic"><use href="#layer"/></svg></span>
  <i class="sep wide"></i>
  <span class="b"><svg class="ic"><use href="#boxa"/></svg></span>
  <span class="b"><svg class="ic"><use href="#layer"/></svg></span>
  <span class="b"><svg class="ic"><use href="#capsule"/></svg></span>
  <span class="b"><svg class="ic"><use href="#ribbed"/></svg></span>
  <i class="sep wide"></i>
  <span class="b drop"><svg class="ic"><use href="#bt1"/></svg></span>
  <span class="b"><svg class="ic"><use href="#bt2"/></svg></span>
  <span class="b drop"><svg class="ic"><use href="#bt3"/></svg></span>
  <span class="b"><svg class="ic"><use href="#bt4"/></svg></span>
  <span class="b"><svg class="ic"><use href="#bt5"/></svg></span>
  <span class="b"><svg class="ic"><use href="#cross"/></svg></span>
  <span class="b drop"><svg class="ic"><use href="#obox"/></svg></span>
  <i class="sep w2"></i>
  <span class="b"><svg class="ic"><use href="#gear"/></svg></span>
  <span class="b drop"><svg class="ic"><use href="#hand"/></svg></span>
  <span class="b"><svg class="ic"><use href="#tree"/></svg></span>
  <i class="sep wide"></i>
  <span class="b"><svg class="ic"><use href="#gcirc"/></svg></span>
  <span class="b"><svg class="ic"><use href="#tarr"/></svg></span>
  <i class="sep w2"></i>
  <span class="b drop"><svg class="ic"><use href="#cyla"/></svg></span>
  <i class="sep full n8"></i>
  <span class="b"><svg class="ic"><use href="#cylp"/></svg></span>
  <span class="b drop"><svg class="ic"><use href="#grid9"/></svg></span>
  <i class="sep full n8"></i>
  <span class="b drop"><svg class="ic"><use href="#tarr"/></svg></span>
  <i class="sep w3"></i>
  <span class="b"><svg class="ic"><use href="#hand"/></svg></span>
  <span class="b"><svg class="ic"><use href="#handg"/></svg></span>
  <i class="sep wide"></i>
  <span class="b"><svg class="ic"><use href="#oboxs"/></svg></span>
  <span class="b"><svg class="ic"><use href="#sky"/></svg></span>
  <i class="sep wide"></i>
  <span class="b"><svg class="ic"><use href="#ycyl"/></svg></span>
</div>

<footer class="status">
  <span class="status-t">命令</span>
  <span class="cmd"></span>
</footer>

<div class="taskbar">
  <div class="search"><i class="search-o"></i><span class="search-t">在这里输入你要搜索的内容</span></div>
  <div class="apps">
    <span class="app a-c"><i class="ring"></i></span>
    <span class="app a-v"><svg class="ap" viewBox="0 0 20 20"><path d="M3 3h9M3 17h9M3 6h9v8H3zM16 3v3M16 9v3M16 15v2" fill="none" stroke="#fff" stroke-width="1.300"/></svg></span>
    <span class="app on a-e"><svg class="ap big" viewBox="0 0 24 24"><circle cx="12" cy="12" r="11" fill="#1a7fd0"/><path d="M3 15C3 6 14 1 21 8c3 3 2 7-1 8h-7c-1-3 3-3 2-6C13 6 7 7 6 13c-1 4 3 9 9 9C8 24 3 21 3 15z" fill="#46d080"/><path d="M9 15c0-5 7-7 7-3 0 2-4 1-2 4h9c-1 5-6 8-11 6-3-2-3-4-3-7z" fill="#0f4a9a"/></svg></span>
    <span class="app on a-f"><svg class="ap big" viewBox="0 0 24 24"><path d="M2 4h8l2 2h10v16H2z" fill="#f0c850"/><path d="M2 9h20v13H2z" fill="#fbe088"/><rect x="8" y="14" width="8" height="8" fill="#5a98b0"/></svg></span>
    <span class="app a-s"><svg class="ap big" viewBox="0 0 24 24"><path d="M8 7V4c0-4 8-4 8 0v3" fill="none" stroke="#eee" stroke-width="1.500"/><path d="M3 7h18v16H3z" fill="#f4f4f4"/><rect x="8" y="11" width="3.500" height="3.500" fill="#e8603a"/><rect x="12.500" y="11" width="3.500" height="3.500" fill="#7ab840"/><rect x="8" y="15.500" width="3.500" height="3.500" fill="#3aa0e0"/><rect x="12.500" y="15.500" width="3.500" height="3.500" fill="#f0b820"/></svg></span>
    <span class="app a-r"><svg class="ap big" viewBox="0 0 24 24"><path d="M12 1c6 0 8 6 6 11l-3 4-2-5V3z" fill="#a8402a"/><path d="M12 3v11" stroke="#ddd" stroke-width="2"/><circle cx="8" cy="19" r="3" fill="none" stroke="#3a90e0" stroke-width="2"/><circle cx="15" cy="19" r="3" fill="none" stroke="#3a90e0" stroke-width="2"/><path d="M9 17l5-8" stroke="#ddd"/></svg></span>
    <span class="app a-b"><svg class="ap big" viewBox="0 0 24 24"><rect x="2" y="3" width="20" height="17" fill="#5ab0e8"/><circle cx="8" cy="10" r="4" fill="#d8f0fa"/><path d="M13 7h7M13 10h7M13 13h7M5 16h15" stroke="#d8f0fa" stroke-width="1.500"/></svg></span>
    <span class="app active a-n"><svg class="ap big" viewBox="0 0 24 24"><rect x="1" y="1" width="22" height="22" fill="#111" stroke="#eee" stroke-width="1.500"/><path d="M3 3c9 2 14 9 13 19H3z" fill="#2a5c98"/><path d="M9 3c5 1 12 8 13 15l-6 4C16 13 14 7 9 3z" fill="#c87828"/><path d="M7 3c3 5 5 12 4 19H6C7 14 6 8 4 3z" fill="#c0e0f0" opacity=".6"/></svg></span>
  </div>
  <div class="tray">
    <svg class="ty tc" viewBox="0 0 12 8"><path d="M1 7l5-6 5 6" fill="none" stroke="#fff" stroke-width="1.200"/></svg>
    <svg class="ty" viewBox="0 0 16 12"><path d="M1 1v3h3V1M2.500 4v3h3" fill="none" stroke="#fff"/><rect x="5.500" y="3" width="9" height="7" fill="none" stroke="#fff"/><rect x="7" y="4.500" width="6" height="4" fill="#fff"/></svg>
    <svg class="ty wifi" viewBox="0 0 16 14"><path d="M1 13C2 7 7 2 15 1M5 13c1-3 4-6 9-7M9 13c0-1 2-3 5-3" fill="none" stroke="#aeb8c0"/><circle cx="13.500" cy="12.500" r="1.300" fill="#fff"/></svg>
    <svg class="ty spk" viewBox="0 0 16 12"><path d="M1 4h2l3-3v10L3 8H1z" fill="none" stroke="#fff"/><path d="M9 4l4 4M13 4l-4 4" stroke="#fff"/></svg>
    <span class="ime">中</span>
    <span class="clock"><span>21:15</span><span>2021/5/13</span></span>
  </div>
</div>
</body>
</html>
```

FILE: styles.css
```css
* { box-sizing: border-box; }
html, body { margin: 0; height: 100%; }
body {
  width: 1228px; height: 768px; overflow: hidden;
  display: flex; flex-direction: column; position: relative;
  font-family: "Noto Sans CJK SC", "Noto Sans", sans-serif;
  font-size: 12px; color: #222; background: #fff;
}
.defs { position: absolute; width: 0; height: 0; }
.ic-abc { font: 8px "Liberation Sans", sans-serif; fill: #114; }
.ic-f { font: italic bold 20px "Liberation Serif", serif; fill: #111; }
.ic-x { font: bold 8px "Liberation Sans", sans-serif; fill: #111; }
.ic-e { font: bold 13px "Liberation Sans", sans-serif; fill: #111; }

.titlebar { height: 23px; flex: none; background: #fff; display: flex; align-items: center; justify-content: space-between; overflow: hidden; }
.title-text { margin-left: -4px; font: 13px "Open Sans", sans-serif; color: #222; }
.win-ctrls { display: flex; align-items: center; gap: 34px; margin-right: -3px; }
.win-min { width: 10px; height: 1.500px; background: #222; }
.win-max { width: 10px; height: 10px; border: 1px solid #222; }

.menubar { height: 19px; flex: none; background: #cfd0e5; display: flex; align-items: center; gap: 14px; overflow: hidden; }
.menu-app { margin-left: -5px; font: 12.500px "Open Sans", sans-serif; color: #222; width: 100px; white-space: nowrap; }
.menu-item { width: 24px; font-size: 12px; line-height: 1; white-space: nowrap; }

.upload { position: absolute; left: 1087px; top: 28px; width: 104px; height: 25px; border-radius: 4px; overflow: hidden; display: flex; border: 1px solid #5ab0e8; z-index: 5; }
.upload-ic { width: 30px; background: #3a9cf0; display: flex; align-items: center; justify-content: center; }
.upload-svg { width: 20px; height: 20px; }
.upload-txt { flex: 1; background: #c4eafc; color: #66aede; font-size: 12px; text-align: center; line-height: 23px; }

.toolbar { flex: none; display: flex; align-items: center; }
.toolbar.top { height: 38px; background: linear-gradient(#fafaff 0, #dcdcec 22%, #cfd0e5 50%, #cacadf 78%, #9a9aae 92%, #6a6a74 97%, #55555e 100%); }
.toolbar.bottom { height: 37px; padding-left: 3px; background: linear-gradient(#fff 0, #f4f4fa 8%, #d6d6e8 30%, #cfd0e5 58%, #c0c0d4 80%, #8f8fa4 93%, #5a5a64 100%); }
.selects { display: flex; gap: 3px; margin-right: -1.300px; height: 25px; align-self: flex-start; margin-top: 7px; }
.sel { position: relative; display: block; height: 25px; background: #fff; border: 1px solid #a8a8b8; padding-left: 5px; font-size: 12px; line-height: 22px; }
.sel b { display: block; font-weight: 400; overflow: hidden; white-space: nowrap; color: #222; }
.sel.off { background: #d4d4de; border-color: #c0c0cc; }
.sel.off b { color: #333; }
.sel.dim { background: #e4e4ee; border-color: #d8d8e0; }
.sel.dim b { color: #aaa; }
.w15 { width: 15px; } .w69 { width: 69px; } .w67 { width: 67px; } .w68 { width: 68px; } .w44 { width: 44px; }
.w44 b { width: 22px; }
.chev { position: absolute; right: 4px; top: 9px; width: 9px; height: 6px; fill: none; stroke: #777; stroke-width: 1.200; }

.b { position: relative; flex: none; width: 28.600px; height: 100%; display: flex; align-items: center; justify-content: center; padding-bottom: 2px; }
.bottom .b { padding: 5px 0 0; }
.b30 { width: 30.400px; }
.ic { width: 24px; height: 24px; display: block; overflow: visible; }
.drop::after { content: ""; position: absolute; right: -3px; bottom: 5px; border: 4px solid transparent; border-top: 5px solid #111; border-bottom: 0; }
.bottom .drop::after { bottom: 3px; }
.sep { flex: none; position: relative; display: block; height: 100%; }
.sep::before { content: ""; position: absolute; left: 50%; margin-left: -1px; top: 5px; height: 15px; width: 2px; background: #eeeef6; box-shadow: 1px 0 0 #a8a8bc; }
.sep.full::before { top: 4px; bottom: 1px; height: auto; width: 1px; box-shadow: none; background: #f4f4fa; }
.wide { width: 18.400px; }
.w2 { width: 20.200px; }
.w3 { width: 25.200px; }
.n4 { width: 4.500px; }
.n7 { width: 7.500px; }
.n8 { width: 8.500px; }
.n10 { width: 10px; }

.viewport {
  flex: 1; position: relative; overflow: hidden;
  background: linear-gradient(#35315f 0, #3c386a 30%, #43406e 52%, #4d4b78 65%, #686790 78%, #82819f 88%, #a8a7bd 100%);
}
.scene { position: absolute; left: 0; top: 0; width: 1228px; height: 586px; }
.solid path { stroke: #050510; stroke-width: 1.800; stroke-linejoin: round; }
.tp { fill: #b5b3d7; }
.fr { fill: #6a6a7f; }
.lt { fill: #bfbddd; }
.arc { fill: none; stroke: #0a0a14; stroke-width: 1.700; }
.axis path { fill: none; stroke: #fff; stroke-width: 1.400; }
.ax-z { font: 11px "Liberation Sans", sans-serif; fill: #fff; }
.ax-dot { fill: #fff; }
.ys { fill: #d8d868; opacity: .8; }
.ax-y { font: 11px "Noto Sans CJK SC", sans-serif; fill: #dfdf70; }
.mark, .wline { stroke: #fff; fill: none; }
.wline { stroke-width: 1.300; }
.cursor { fill: #fff; stroke: #222; stroke-width: .8; }
.compass path { fill: none; stroke: #cfc8f4; stroke-width: 1.500; }
.compass .hatch { fill: url(#hatch); }
.compass .plane { fill: #1f5070; }
.c-dot { fill: #d4ccf4; }
.c-red { fill: #c80818; }
.c-t { font: 13px "Liberation Sans", sans-serif; fill: #e8dc98; }
.mini path { fill: none; stroke: #e8e8f0; stroke-width: 1; }
.mini text { font: 11px "Liberation Sans", sans-serif; fill: #e8e8f0; }

.tree { position: absolute; left: 0; top: -16px; width: 270px; }
.row { position: relative; height: 37.900px; display: flex; align-items: center; }
.lab { display: block; height: 24px; line-height: 23px; padding: 0 3px; font-size: 17px; color: #fff; background: #35325f; white-space: nowrap; letter-spacing: .2px; position: relative; }
.lab.clear { background: transparent; }
.lab.under { text-decoration: underline; text-underline-offset: 1px; }
.lab.pick { background: #2e2b68; }
.lab.tight { letter-spacing: -.2px; }
.ti { width: 30px; height: 30px; flex: none; position: relative; z-index: 1; overflow: visible; }
.lv0 .ti { margin: 0 -12px 0 -8px; }
.lvm { margin-left: -3px; }
.lv1 { padding-left: 6px; }
.lv1 .lab { margin-left: 2px; }
.lv1::before { content: ""; position: absolute; left: 0; top: 50%; width: 6px; height: 2px; background: #fff; }
.stem::after { content: ""; position: absolute; left: 14px; top: 60%; width: 2px; height: 30px; background: #fff; }
.long::after { height: 46px; }
.tn { width: 30px; height: 30px; flex: none; position: relative; z-index: 1; }
.ts { width: 32px; height: 32px; flex: none; margin-left: 2px; position: relative; z-index: 1; }
.lv2 .lab { margin-left: 1px; }
.leaf { padding-left: 32px; }
.leaf::before { content: ""; position: absolute; left: 15px; top: 50%; width: 18px; height: 2px; background: #fff; }
.leaf .big { margin-left: 0; }

.pal { position: absolute; z-index: 2; background: linear-gradient(#fff 0, #fff 48%, #e4e4f2 60%, #cfd0e6 72%, #c8c8dc 90%, #8e8ea2 100%); box-shadow: 2px 3px 9px rgba(18, 18, 50, .38); }
.pal-h { height: 34px; position: relative; }
.pal-t { position: absolute; left: 8px; top: 6px; font-size: 12px; line-height: 16px; color: #222; white-space: nowrap; }
.pal-x { position: absolute; right: 1px; top: 7px; width: 19px; height: 19px; background: #c64a50; color: #fff; font: bold 10px/18px "Liberation Sans", sans-serif; text-align: center; }
.pal-b { position: relative; height: 30px; padding-left: 13px; display: flex; align-items: center; }
.pal-b.tall { height: 31px; }
.pal-b.low { height: 29px; }
.grip { position: absolute; left: 5px; top: 5px; width: 2px; height: 15px; background: #f2f2f8; box-shadow: 1px 0 0 #aaaabc; }
.c { position: relative; flex: none; width: 28.600px; height: 28px; display: flex; align-items: center; justify-content: center; }
.c .ic { width: 23px; height: 23px; }
.c.drop::after { right: -2px; bottom: -2px; }
.pal-sel { flex: 1; position: relative; height: 26px; margin: 0 1px 0 0; background: #cdcdd8; color: #8a8a92; font-size: 12px; line-height: 25px; padding-left: 3px; }
.pal-sel .chev { stroke: #aaa; top: 10px; }

.p1 { left: 132px; top: 98px; width: 103px; }
.p2 { left: 590px; top: 28px; width: 124px; }
.p3 { left: 772px; top: 79px; width: 99px; }
.p4 { left: 959px; top: 44px; width: 99px; }
.p5 { left: 1017px; top: 178px; width: 127px; }
.p6 { left: 1043px; top: 270px; width: 75px; }
.p7 { left: 968px; top: 349px; width: 71px; }
.p8 { left: 993px; top: 425px; width: 45px; }
.p9 { left: 949px; top: 501px; width: 127px; }
.p10 { left: 366px; top: 374px; width: 45px; }
.p11 { left: 348px; top: 510px; width: 299px; }
.p12 { left: 269px; top: 505px; width: 45px; }
.p13 { left: 58px; top: 433px; width: 209px; }
.p14 { left: 137px; top: 344px; width: 43px; }
.p15 { left: 95px; top: 371px; width: 43px; }

.timer { position: absolute; left: 772px; top: 466px; width: 51px; height: 51px; border-radius: 50%; border: 3px solid #e4f4ff; background: radial-gradient(circle at 50% 40%, #3a96f0, #3e9ff6 70%, #6cbcf8); color: #d8f0ff; font: 14px/45px "Open Sans", sans-serif; text-align: center; box-shadow: 0 0 2px #aacdf0; z-index: 3; }

.status { height: 25px; flex: none; background: #cfd0e5; position: relative; display: flex; align-items: center; justify-content: space-between; overflow: hidden; }
.status-t { margin-left: -5px; font-size: 12px; color: #222; }
.cmd { width: 298px; height: 21px; background: #fff; border: 1px solid #aaaabc; margin-top: 1px; }

.taskbar { height: 40px; flex: none; display: flex; background: #1a3342; color: #fff; }
.search { width: 324px; background: #f2f2f2; display: flex; align-items: center; position: relative; }
.search-o { position: absolute; left: -6px; top: 12px; width: 13px; height: 13px; border: 1.500px solid #333; border-radius: 50%; }
.search-t { margin-left: 20px; font-size: 13px; color: #444; }
.apps { display: flex; align-items: stretch; }
.app { flex: none; width: 49px; display: flex; align-items: center; justify-content: center; position: relative; }
.ring { width: 16px; height: 16px; border: 2.500px solid #f0f0f0; border-radius: 50%; }
.ap { width: 20px; height: 20px; display: block; }
.ap.big { width: 24px; height: 24px; }
.on::after { content: ""; position: absolute; left: 4px; right: 4px; bottom: 0; height: 2px; background: #76b9ed; }
.active { background: #3d5160; }
.active::after { content: ""; position: absolute; left: 0; right: 0; bottom: 0; height: 2px; background: #76b9ed; }
.tray { flex: 1; display: flex; align-items: center; justify-content: flex-start; padding-left: 344px; overflow: hidden; }
.ty { width: 15px; height: 13px; margin-right: 10px; flex: none; }
.tc { width: 12px; height: 8px; margin-right: 11px; }
.wifi { margin-right: 8px; }
.spk { margin-right: 7px; }
.ime { font-size: 14px; margin-right: 13px; flex: none; }
.clock { display: flex; flex-direction: column; flex: none; font: 12px/20px "Open Sans", sans-serif; align-items: flex-start; margin-top: 2px; }
.clock span:first-child { margin-left: 13px; }
```
